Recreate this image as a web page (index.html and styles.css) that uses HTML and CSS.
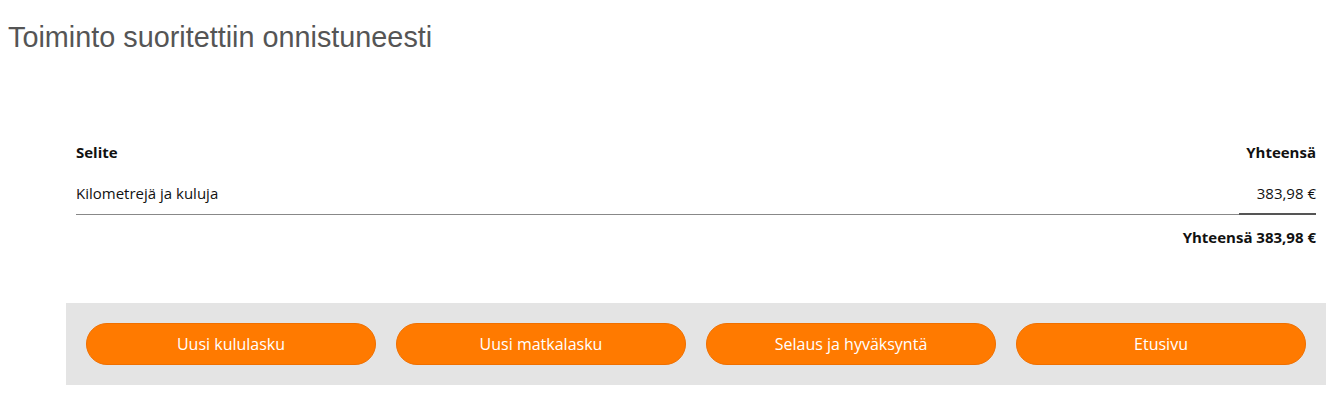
FILE: index.html
```html
<!DOCTYPE html>
<html lang="fi">
<head>
<meta charset="utf-8">
<title>Toiminto suoritettiin onnistuneesti</title>
<link rel="stylesheet" href="styles.css">
</head>
<body>
<h1 class="title">Toiminto suoritettiin onnistuneesti</h1>
<div class="content">
  <table class="summary">
    <thead>
      <tr><th class="desc">Selite</th><th class="amount">Yhteensä</th></tr>
    </thead>
    <tbody>
      <tr class="item"><td class="desc">Kilometrejä ja kuluja</td><td class="amount">383,98 €</td></tr>
    </tbody>
  </table>
  <div class="total">Yhteensä 383,98 €</div>
</div>
<div class="actions">
  <button class="btn">Uusi kululasku</button>
  <button class="btn">Uusi matkalasku</button>
  <button class="btn">Selaus ja hyväksyntä</button>
  <button class="btn">Etusivu</button>
</div>
</body>
</html>
```
FILE: styles.css
```css
html, body { margin: 0; padding: 0; background: #fff; }
body { font-family: "Open Sans", "Noto Sans", sans-serif; color: #111; }
.title {
  font-family: "Liberation Sans", Arial, sans-serif;
  font-weight: normal;
  font-size: 28.8px;
  color: #555;
  margin: 0;
  padding: 21px 0 0 8px;
  line-height: 32px;
}
.content { padding: 87px 22px 0 76px; }
.summary { width: 100%; border-collapse: separate; border-spacing: 0; font-size: 15px; }
.summary th { font-weight: bold; text-align: left; padding: 0; height: 24px; line-height: 24px; }
.summary td { padding: 19px 0 11px; line-height: 20px; }
.summary th.amount, .summary td.amount { text-align: right; }
.summary tbody td { border-bottom: 1px solid #888; }
.summary tbody td.amount { border-bottom: 2px solid #555; padding-bottom: 10px; width: 77px; }
.total { text-align: right; font-weight: bold; font-size: 15px; padding-top: 12px; line-height: 20px; }
.actions {
  margin: 56px 12px 0 66px;
  background: #e4e4e4;
  padding: 20px;
  display: flex;
  gap: 20px;
}
.btn {
  flex: 1;
  height: 42px;
  border: 1px solid #f07000;
  border-radius: 21px;
  background: #ff7a00;
  color: #fff;
  font-family: "Open Sans", "Noto Sans", sans-serif;
  font-size: 16px;
  cursor: pointer;
}
```
